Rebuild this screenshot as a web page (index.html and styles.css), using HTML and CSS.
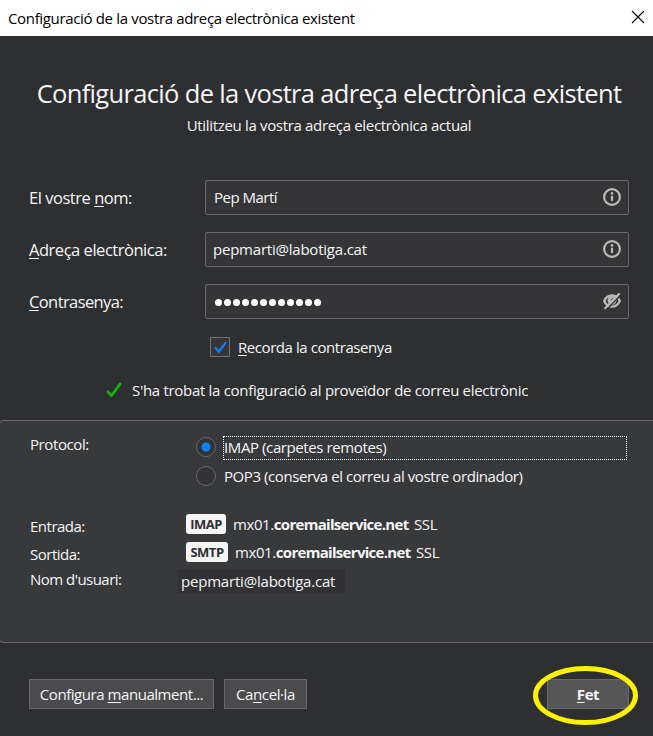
FILE: index.html
```html
<!DOCTYPE html>
<html lang="ca">
<head>
<meta charset="utf-8">
<title>Configuració de la vostra adreça electrònica existent</title>
<link rel="stylesheet" href="styles.css">
</head>
<body>
<div class="window">
  <header class="titlebar">
    <span class="titlebar-text">Configuració de la vostra adreça electrònica existent</span>
    <svg class="close" width="14" height="14" viewBox="0 0 14 14"><path d="M1 1L13 13M13 1L1 13" stroke="#000" stroke-width="1.1" fill="none"/></svg>
  </header>
  <main class="content">
    <h1 class="heading"><span>Configuració de la vostra adreça electrònica existent</span></h1>
    <p class="subheading"><span>Utilitzeu la vostra adreça electrònica actual</span></p>

    <div class="form">
      <label class="label name-label"><span>El vostre <u>n</u>om:</span></label>
      <div class="input"><span class="name-value">Pep Martí</span>
        <svg width="18" height="18" viewBox="0 0 18 18"><circle cx="9" cy="9" r="7.9" fill="none" stroke="#b9b9ba" stroke-width="2.2"/><circle cx="9" cy="5.4" r="1.3" fill="#b9b9ba"/><path d="M9 8.6v3.6" stroke="#b9b9ba" stroke-width="2.2" stroke-linecap="round"/></svg>
      </div>
      <label class="label mail-label"><span><u>A</u>dreça electrònica:</span></label>
      <div class="input"><span class="mail-value">pepmarti@labotiga.cat</span>
        <svg width="18" height="18" viewBox="0 0 18 18"><circle cx="9" cy="9" r="7.9" fill="none" stroke="#b9b9ba" stroke-width="2.2"/><circle cx="9" cy="5.4" r="1.3" fill="#b9b9ba"/><path d="M9 8.6v3.6" stroke="#b9b9ba" stroke-width="2.2" stroke-linecap="round"/></svg>
      </div>
      <label class="label pass-label"><span><u>C</u>ontrasenya:</span></label>
      <div class="input">
        <span class="dots"><i></i><i></i><i></i><i></i><i></i><i></i><i></i><i></i><i></i><i></i><i></i><i></i></span>
        <svg width="18" height="18" viewBox="0 0 18 18"><path d="M1.2 9C3 5 6 3.4 9 3.4S15 5 16.8 9C15 13 12 14.6 9 14.6S3 13 1.2 9Z" fill="none" stroke="#b9b9ba" stroke-width="2.4"/><circle cx="9" cy="8.3" r="4.4" fill="#b9b9ba"/><path d="M8 8.5a2 2 0 0 1 2-2" stroke="#353537" stroke-width="1" fill="none"/><path d="M3.6 17.4L17.6 3.2" stroke="#353537" stroke-width="1.4"/><path d="M2.2 16.2L16 2" stroke="#b9b9ba" stroke-width="2.2" stroke-linecap="round"/></svg>
      </div>
    </div>

    <div class="remember">
      <span class="checkbox"><svg width="18" height="18" viewBox="0 0 18 18"><path d="M4.6 10L7.8 13.8L14.4 4.8" fill="none" stroke="#0a84ff" stroke-width="2.2" stroke-linecap="round" stroke-linejoin="round"/></svg></span>
      <span class="remember-text"><u>R</u>ecorda la contrasenya</span>
    </div>

    <div class="status">
      <svg width="16" height="16" viewBox="0 0 16 16"><path d="M1.8 9.6L5.4 13.8L14.2 1.8" fill="none" stroke="#12bc00" stroke-width="2.5" stroke-linecap="round" stroke-linejoin="round"/></svg>
      <span class="status-text">S'ha trobat la configuració al proveïdor de correu electrònic</span>
    </div>
  </main>

  <section class="panel">
    <div class="protocol">
      <span class="key protocol-key">Protocol:</span>
      <div class="options">
        <div class="option"><span class="radio checked"></span><span class="option-text focused"><span>IMAP (carpetes remotes)</span></span></div>
        <div class="option"><span class="radio"></span><span class="option-text pop"><span>POP3 (conserva el correu al vostre ordinador)</span></span></div>
      </div>
    </div>
    <div class="server">
      <span class="key in-key">Entrada:</span>
      <span class="badge imap">IMAP</span><span class="host">mx01.<b>coremailservice.net</b></span><span class="ssl">SSL</span>
    </div>
    <div class="server">
      <span class="key out-key">Sortida:</span>
      <span class="badge smtp">SMTP</span><span class="host">mx01.<b>coremailservice.net</b></span><span class="ssl">SSL</span>
    </div>
    <div class="user">
      <span class="key user-key">Nom d'usuari:</span>
      <span class="user-value">pepmarti@labotiga.cat</span>
    </div>
  </section>

  <footer class="actions">
    <button class="button manual"><span>Configura <u>m</u>anualment...</span></button>
    <button class="button cancel"><span>Ca<u>n</u>cel·la</span></button>
    <button class="button done"><span><u>F</u>et</span>
      <svg class="ring" width="106" height="60" viewBox="0 0 106 60"><ellipse cx="52.5" cy="29.5" rx="50" ry="27" fill="none" stroke="#fff200" stroke-width="5"/></svg>
    </button>
  </footer>
</div>
</body>
</html>
```
FILE: styles.css
```css
* { box-sizing: border-box; }

body {
  margin: 0;
  background: #2e2f31;
  color: #f5f5f6;
  font: 15px/20px "Open Sans", "Noto Sans", sans-serif;
  font-feature-settings: "locl" 0, "liga" 0;
  letter-spacing: -0.4px;
  white-space: nowrap;
}

u {
  text-decoration: underline;
  text-decoration-thickness: 1px;
  text-underline-offset: 2px;
  text-decoration-skip-ink: none;
}

.window { width: 653px; height: 736px; overflow: hidden; display: flex; flex-direction: column; }

.titlebar {
  height: 36px;
  padding: 0 8px 1px;
  display: flex;
  align-items: center;
  justify-content: space-between;
  background: #fff;
  color: #000;
}
.titlebar-text { letter-spacing: -0.34px; }
.close { margin-top: -1px; }

.content { height: 384px; padding-top: 40px; }

.heading {
  margin: 0;
  padding-left: 5px;
  height: 34px;
  font-size: 25.5px;
  line-height: 34px;
  font-weight: 400;
  text-align: center;
  letter-spacing: -0.67px;
}
.subheading { margin: 5px 0 0; padding-left: 5px; height: 21px; text-align: center; letter-spacing: -0.33px; }

.form {
  margin: 44px 24px 0 29px;
  display: grid;
  grid-template-columns: 176px 424px;
  row-gap: 17px;
}
.label { height: 35px; font-size: 16.5px; line-height: 36px; letter-spacing: -0.47px; }
.pass-label { letter-spacing: -0.6px; }
.input {
  height: 35px;
  padding: 0 7px 1px 8px;
  display: flex;
  align-items: center;
  justify-content: space-between;
  background: #353537;
  border: 1px solid #68686a;
  border-radius: 2px;
}
.name-value { letter-spacing: -0.5px; }
.mail-value { margin-left: -1px; letter-spacing: -0.22px; }
.dots { display: flex; gap: 2px; padding: 3px 0 0 1px; }
.dots i { width: 7px; height: 7px; border-radius: 50%; background: #fff; }

.remember { margin: 18px 0 0 210px; display: flex; align-items: center; gap: 8px; }
.remember-text { letter-spacing: -0.43px; }
.checkbox { width: 20px; height: 20px; border: 1px solid #737375; background: #353537; display: flex; }

.status { margin: 23px 0 0 106px; display: flex; align-items: center; gap: 10px; }
.status-text { letter-spacing: -0.3px; }

.panel {
  height: 223px;
  margin: 0 -4px 0 -1px;
  padding: 15px 0 0 30px;
  background: #38393b;
  border: 1px solid #6a6a6c;
  border-radius: 4px;
}
.protocol { display: flex; height: 78px; }
.key { width: 156px; flex: none; }
.protocol-key { width: 166px; margin-top: -2px; }
.option { display: flex; gap: 7px; height: 29px; }
.radio { width: 20px; height: 20px; margin-top: 1px; border: 1px solid #68686a; border-radius: 50%; background: #323335; }
.checked { background: radial-gradient(circle, #0a84ff 0 4px, transparent 5px) #323335; }
.option-text { width: 404px; height: 24px; line-height: 20px; border: 1px solid transparent; }
.focused { border: 1px dotted #fff; }
.pop { letter-spacing: -0.42px; }

.server { display: flex; height: 28px; }
.server .key { padding-top: 2px; letter-spacing: -0.5px; }
.badge {
  height: 20px;
  border-radius: 3px;
  background: #f5f5f6;
  color: #2e2f31;
  font-size: 13px;
  font-weight: 700;
  text-align: center;
  letter-spacing: -0.5px;
}
.imap { width: 40px; }
.smtp { width: 42px; }
.host { margin-left: 7px; width: 181px; }
.host b { letter-spacing: -0.7px; }

.user { display: flex; }
.user-key { width: 148px; margin-top: -1px; letter-spacing: -0.53px; }
.user-value { width: 167px; height: 24px; margin-top: -1px; padding-left: 3px; line-height: 24px; background: #323234; letter-spacing: -0.2px; }

.actions { margin: 36px 24px 0 29px; display: flex; gap: 10px; }
.button {
  height: 30px;
  padding: 0;
  font: inherit;
  font-feature-settings: inherit;
  letter-spacing: inherit;
  color: inherit;
  background: #4b4b4d;
  border: 1px solid #68686a;
}
.manual { width: 185px; letter-spacing: -0.45px; }
.cancel { width: 83px; }
.done { position: relative; width: 82px; margin-left: auto; background: #565656; font-weight: 700; }
.ring { position: absolute; left: -15px; top: -14px; }
```
